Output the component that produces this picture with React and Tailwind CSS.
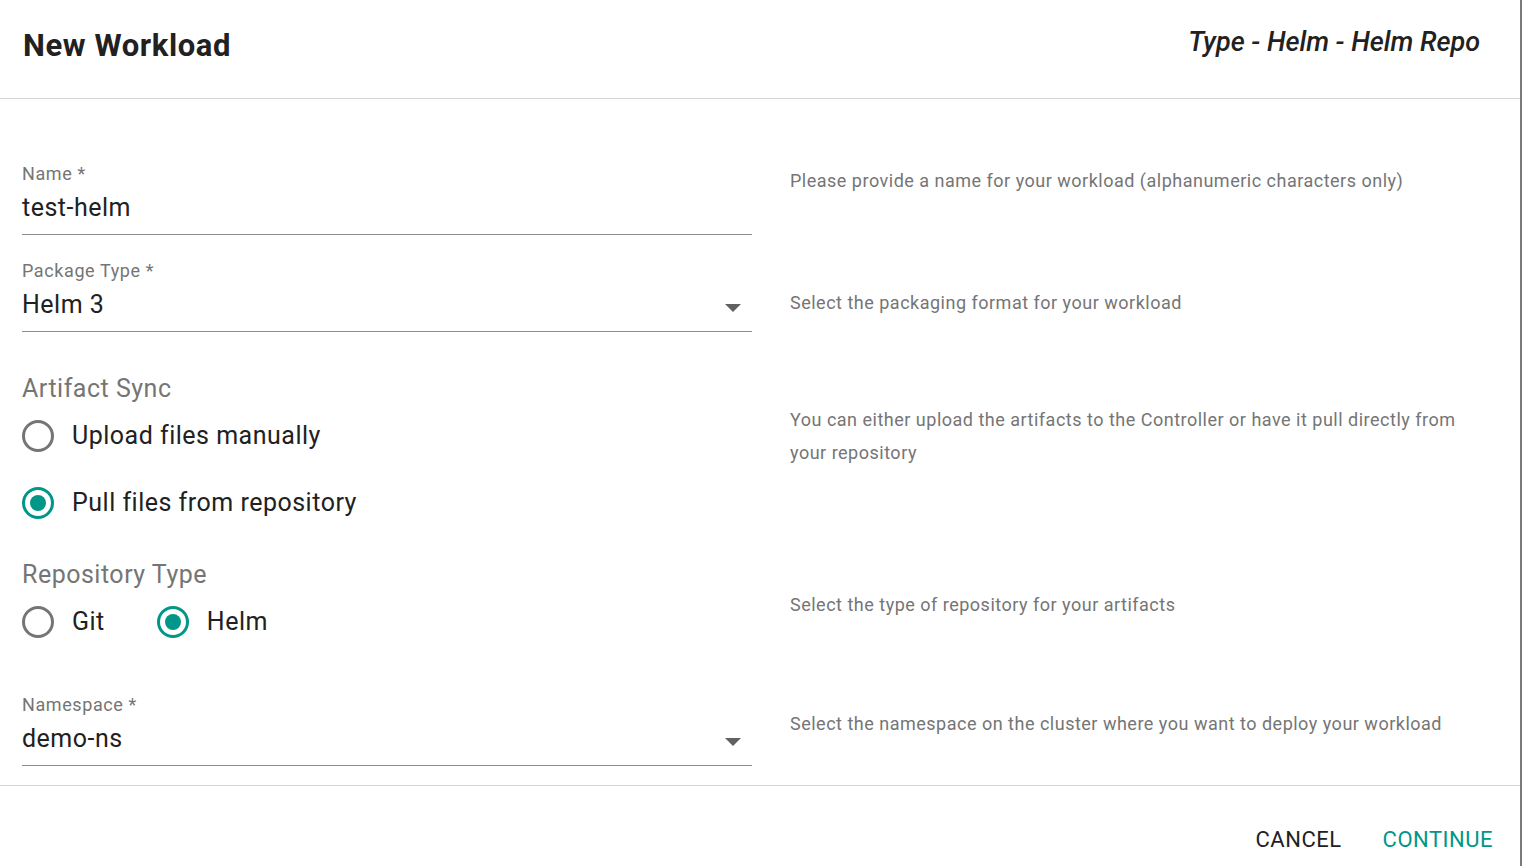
const Radio = ({ checked, label }) => {
    return (
        <div className="flex items-center h-[48px]">
            {checked ? (
                <span className="w-[32px] h-[32px] rounded-full border-[3px] border-[#009688] flex items-center justify-center">
                    <span className="w-[16px] h-[16px] rounded-full bg-[#009688]"></span>
                </span>
            ) : (
                <span className="w-[32px] h-[32px] rounded-full border-[3px] border-[#757575]"></span>
            )}
            <span className="ml-[18px] text-[25px] leading-[32px] tracking-[0.5px] text-[#212121]">{label}</span>
        </div>
    )
}

const Field = ({ label, value, select }) => {
    return (
        <div className="border-b border-[#8c8c8c] pb-[10px]">
            <div className="text-[18px] leading-[20px] tracking-[0.6px] text-[#757575]">{label}</div>
            <div className="flex items-center justify-between mt-[8px]">
                <span className="text-[25px] leading-[32px] tracking-[0.5px] text-[#212121]">{value}</span>
                {select && (
                    <svg width="16" height="8" viewBox="0 0 16 8" className="mr-[11px] mt-[6px]">
                        <path d="M0 0 L16 0 L8 8 Z" fill="#616161" />
                    </svg>
                )}
            </div>
        </div>
    )
}

const Help = ({ children, className }) => (
    <div className={"text-[18px] leading-[33px] tracking-[0.5px] text-[#757575] " + (className || "")}>{children}</div>
)

export default function App() {
    return (
        <div className="flex w-[1522px] h-[866px] overflow-hidden bg-white" style={{ fontFamily: 'Roboto, "Liberation Sans", sans-serif' }}>
            <div className="w-[1520px] flex flex-col">
                <div className="h-[99px] border-b border-[#d6d6d6] flex items-start justify-between pl-[23px] pr-[40px] shrink-0">
                    <h1 className="text-[31px] font-bold tracking-[0.6px] text-[#212121] mt-[26px] leading-[40px]">New Workload</h1>
                    <div className="text-[27px] italic font-medium text-[#212121] mt-[22px] leading-[40px]">Type - Helm - Helm Repo</div>
                </div>

                <div className="flex-1 pl-[22px]">
                    {/* name */}
                    <div className="flex mt-[65px]">
                        <div className="w-[730px]">
                            <Field label="Name *" value="test-helm" />
                        </div>
                        <Help className="ml-[38px]">Please provide a name for your workload (alphanumeric characters only)</Help>
                    </div>

                    {/* package type */}
                    <div className="flex mt-[26px]">
                        <div className="w-[730px]">
                            <Field label="Package Type *" value="Helm 3" select />
                        </div>
                        <Help className="ml-[38px] mt-[25px]">Select the packaging format for your workload</Help>
                    </div>

                    {/* artifact sync */}
                    <div className="flex mt-[41px]">
                        <div className="w-[730px]">
                            <div className="text-[25px] leading-[32px] tracking-[0.5px] text-[#757575]">Artifact Sync</div>
                            <div className="mt-[7px]">
                                <Radio label="Upload files manually" />
                            </div>
                            <div className="mt-[19px]">
                                <Radio checked label="Pull files from repository" />
                            </div>
                        </div>
                        <Help className="ml-[38px] mt-[30px] w-[680px]">You can either upload the artifacts to the Controller or have it pull directly from your repository</Help>
                    </div>

                    {/* repository type */}
                    <div className="flex mt-[32px]">
                        <div className="w-[730px]">
                            <div className="text-[25px] leading-[32px] tracking-[0.5px] text-[#757575]">Repository Type</div>
                            <div className="flex mt-[7px] gap-[52px]">
                                <Radio label="Git" />
                                <Radio checked label="Helm" />
                            </div>
                        </div>
                        <Help className="ml-[38px] mt-[29px]">Select the type of repository for your artifacts</Help>
                    </div>

                    {/* namespace */}
                    <div className="flex mt-[49px]">
                        <div className="w-[730px]">
                            <Field label="Namespace *" value="demo-ns" select />
                        </div>
                        <Help className="ml-[38px] mt-[12px]">Select the namespace on the cluster where you want to deploy your workload</Help>
                    </div>
                </div>

                <div className="h-[81px] border-t border-[#d6d6d6] flex items-start justify-end pr-[27px] shrink-0">
                    <button className="text-[22px] tracking-[0.5px] text-[#212121] mt-[40px] leading-[28px]">CANCEL</button>
                    <button className="text-[22px] tracking-[0.5px] text-[#009688] mt-[40px] leading-[28px] ml-[41px]">CONTINUE</button>
                </div>
            </div>
            <div className="flex-1 bg-[#7a7a7a]"></div>
        </div>
    )
}
